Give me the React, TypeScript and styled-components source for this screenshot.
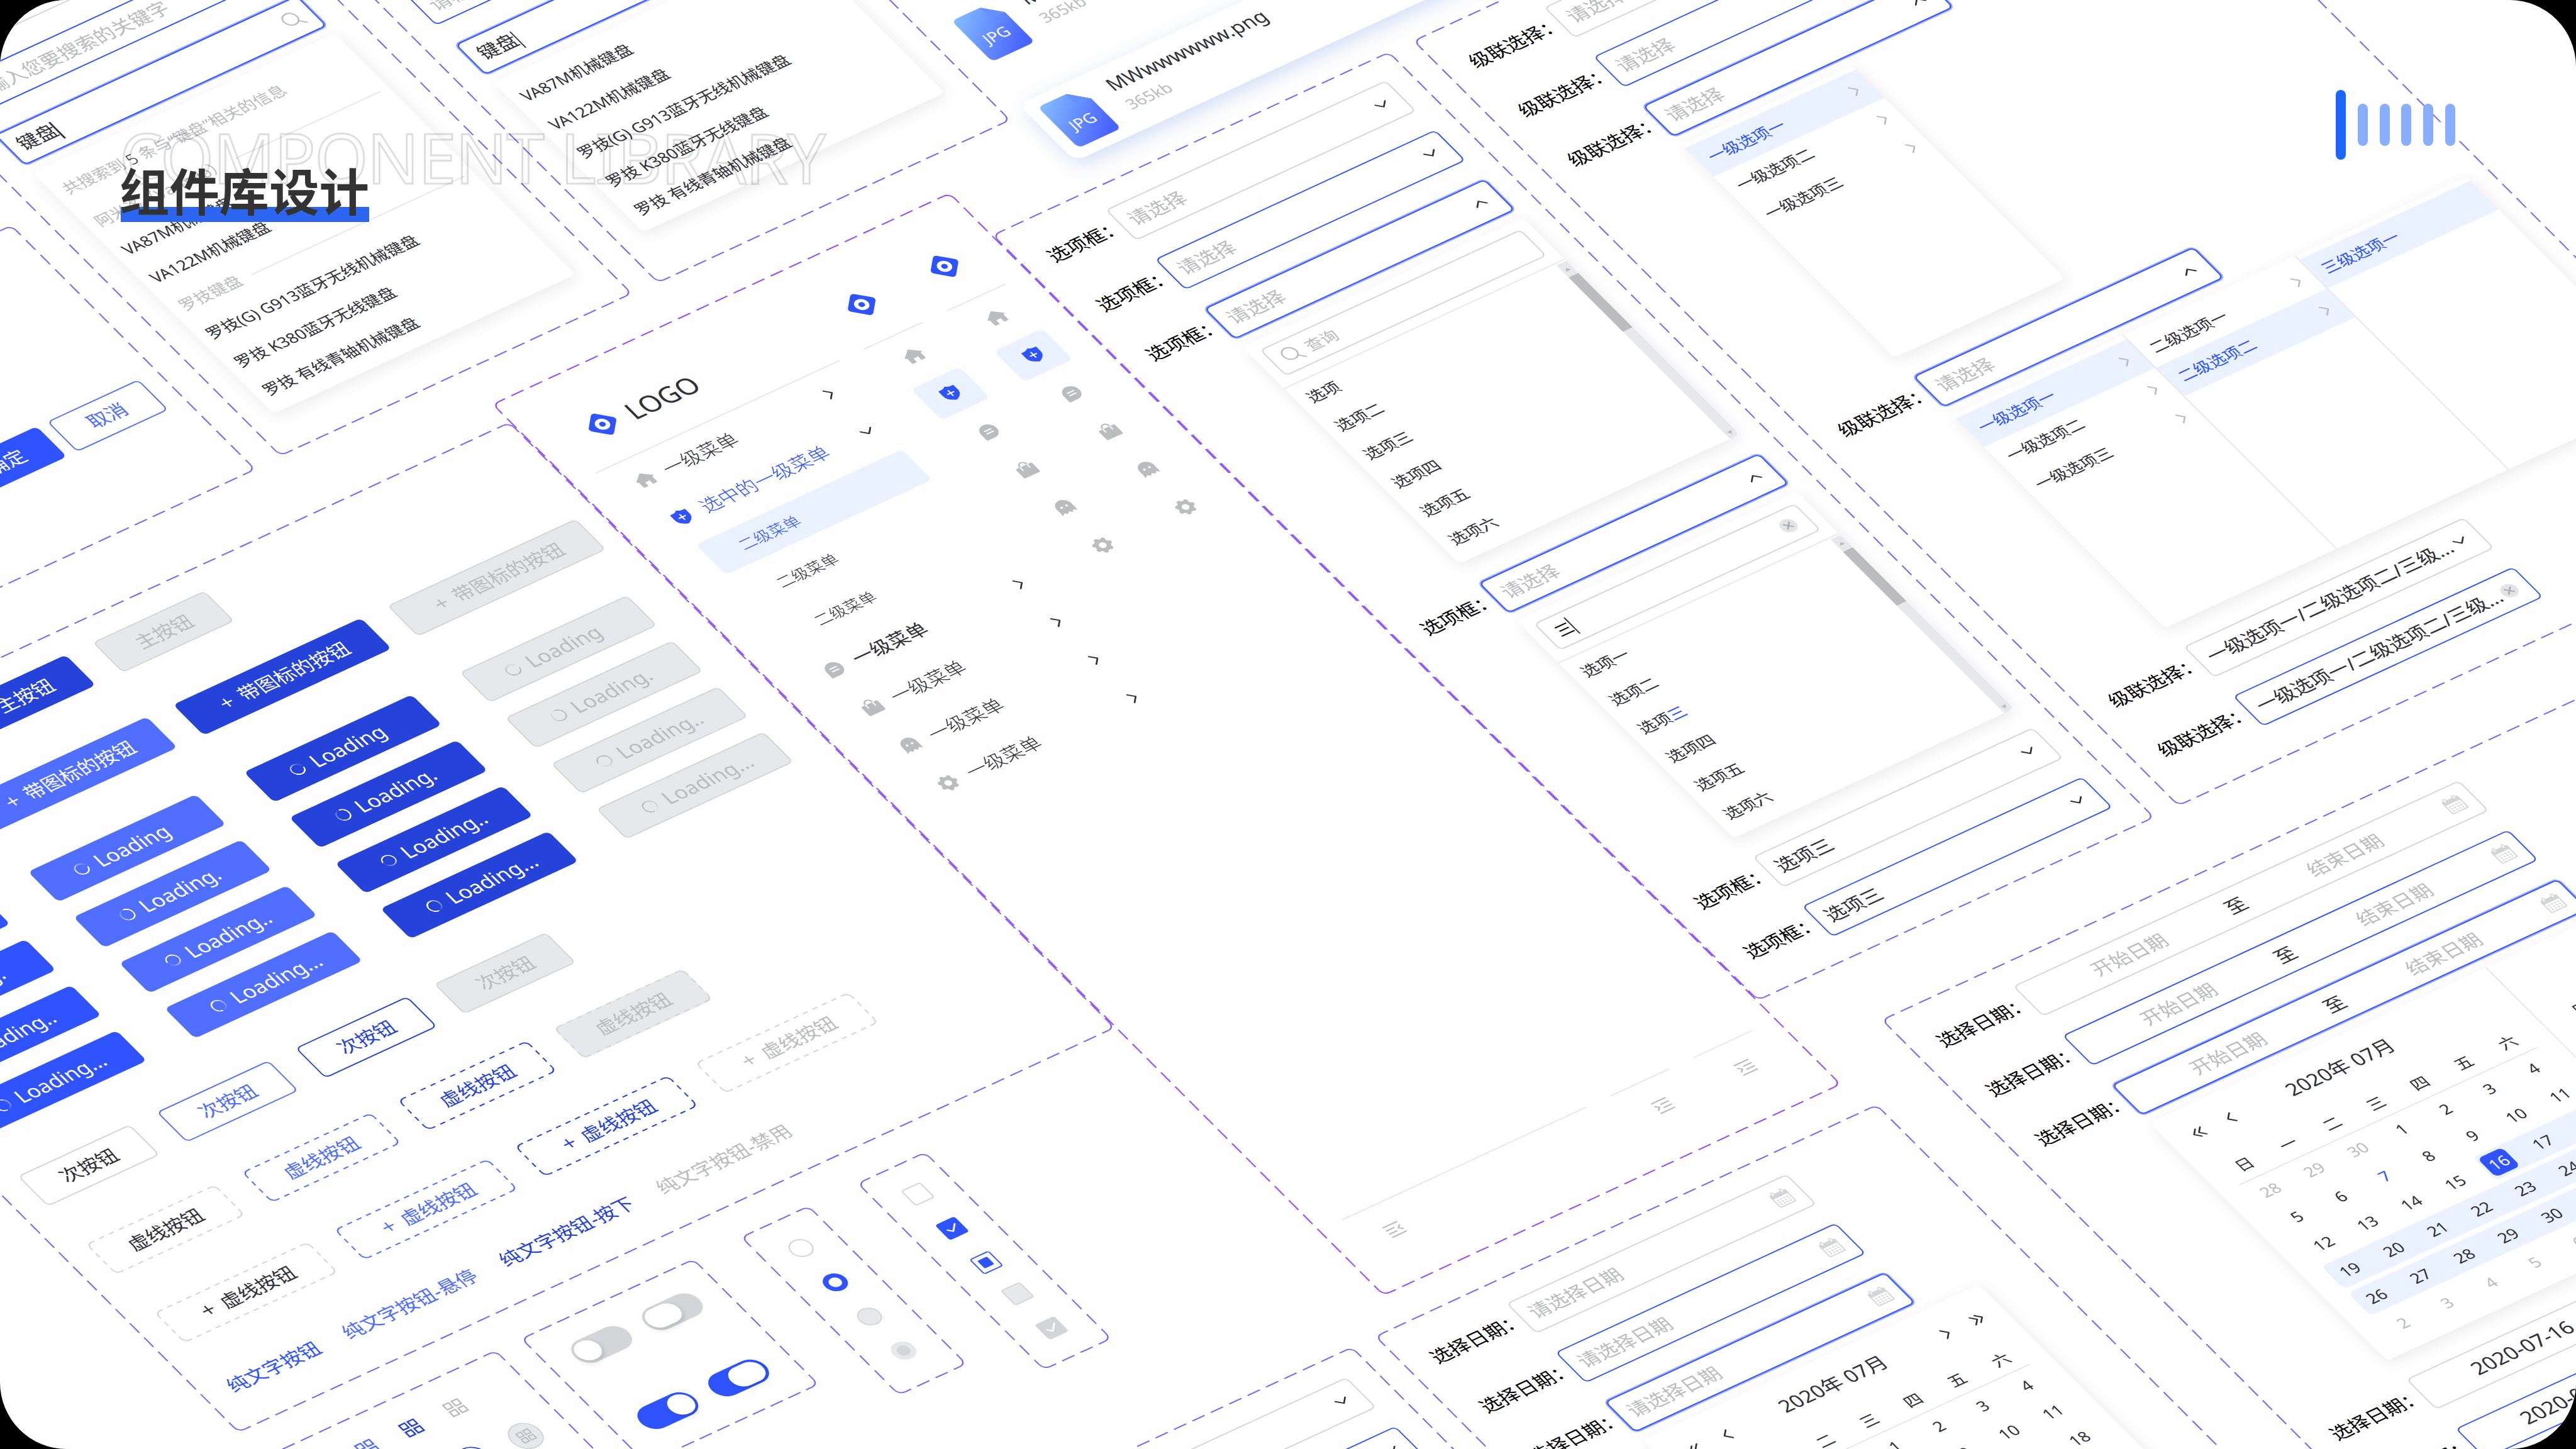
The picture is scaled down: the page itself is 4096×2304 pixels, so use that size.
import React from "react";
import styled, { createGlobalStyle, css } from "styled-components";

const PRIMARY = '#2f54ff';
const HOVER = '#506eff';
const ACTIVE = '#2643d9';
const TEXT = '#303238';
const MUTED = '#bbbcbe';
const BORDER = '#d4d5d9';
const FILL = '#e7e8ec';
const TINT = '#eaf2ff';

const GlobalStyle = createGlobalStyle`
    html, body {
        margin: 0;
        background: #000;
        overflow: hidden;
    }
    * {
        box-sizing: border-box;
    }
`

const Page = styled.main`
    position: relative;
    width: 4096px;
    height: 2304px;
    overflow: hidden;
    background: #fefefe;
    border-radius: 106px;
    font-family: "Noto Sans", "Noto Sans CJK SC", sans-serif;
    color: ${TEXT};
`

/** the tilted canvas. 1 css px inside of it is 1 px of the component sheet */
const Board = styled.div`
    position: absolute;
    left: 0;
    top: 0;
    width: 0;
    height: 0;
    zoom: 2.13333;
    transform-origin: 0 0;
    transform: matrix(0.9079, -0.4192, 0.7071, 0.7071, 0, 0);
    font-size: 14.67px;
    line-height: 20px;
    white-space: nowrap;
`

/* ---------- dashed outlines ---------- */

const Outline = styled.svg`
    position: absolute;
    left: 0;
    top: 0;
    overflow: visible;
    pointer-events: none;
`

interface dashProps {
    w: number,
    h: number,
    r: number,
    dash: number,
    color: string,
}

/** solid rounded corners, and edges that begin and end on half a dash */
const DashedOutline = ({ w, h, r, dash, color }: dashProps) => {
    const gap = dash > 5 ? 5 : dash;
    const edge = (len: number) => {
        const period = len / Math.max(1, Math.round(len / (dash + gap)));
        return { strokeDasharray: `${dash} ${period - dash}`, strokeDashoffset: dash / 2 };
    };
    const x = w - 0.5;
    const y = h - 0.5;
    const a = 0.5 + r;
    const lenX = w - 1 - r * 2;
    const lenY = h - 1 - r * 2;
    return (
        <Outline width={w} height={h} fill="none" stroke={color} strokeWidth="1">
            <path d={`M0.5 ${a}A${r} ${r} 0 0 1 ${a} 0.5M${x - r} 0.5A${r} ${r} 0 0 1 ${x} ${a}M${x} ${y - r}A${r} ${r} 0 0 1 ${x - r} ${y}M${a} ${y}A${r} ${r} 0 0 1 0.5 ${y - r}`} />
            <path d={`M${a} 0.5h${lenX}`} {...edge(lenX)} />
            <path d={`M${a} ${y}h${lenX}`} {...edge(lenX)} />
            <path d={`M0.5 ${a}v${lenY}`} {...edge(lenY)} />
            <path d={`M${x} ${a}v${lenY}`} {...edge(lenY)} />
        </Outline>
    );
}

interface boxProps {
    $x: number,
    $y: number,
    $w: number,
    $h: number,
    $gap?: number,
}

const PanelBox = styled.section<boxProps>`
    position: absolute;
    left: ${p => p.$x}px;
    top: ${p => p.$y}px;
    width: ${p => p.$w}px;
    height: ${p => p.$h}px;
    padding: 20px;
    display: flex;
    flex-direction: column;
    gap: ${p => p.$gap ?? 20}px;
`

interface panelProps {
    x: number,
    y: number,
    w: number,
    h: number,
    gap?: number,
    color?: string,
    className?: string,
    children: React.ReactNode,
}

const Panel = ({ x, y, w, h, gap, color = '#7b61ff', className, children }: panelProps) => (
    <PanelBox className={className} $x={x} $y={y} $w={w} $h={h} $gap={gap}>
        <DashedOutline w={w} h={h} r={5} dash={10} color={color} />
        {children}
    </PanelBox>
)

/* ---------- icons ---------- */

const Svg = styled.svg<{ $size?: number }>`
    display: block;
    flex: none;
    width: ${p => p.$size ?? 16}px;
    height: ${p => p.$size ?? 16}px;
    overflow: visible;
`

const turns = { down: 0, left: 90, up: 180, right: 270 };

const Chevron = ({ dir, color = TEXT, double = false }: { dir: keyof typeof turns, color?: string, double?: boolean }) => (
    <Svg viewBox="0 0 16 16" fill="none" stroke={color} strokeWidth="1.1" strokeLinecap="round" strokeLinejoin="round">
        <g transform={`rotate(${turns[dir]} 8 8)`}>
            {double ? <path d="M4.4 4l3.6 3.6L11.6 4M4.4 8l3.6 3.6L11.6 8" /> : <path d="M4 6l4 4 4-4" />}
        </g>
    </Svg>
)

const SearchIcon = () => (
    <Svg viewBox="0 0 16 16" fill="none" stroke={MUTED} strokeWidth="1.1" strokeLinecap="round">
        <circle cx="7" cy="7" r="5.3" />
        <path d="M11 11l3.6 3.6" />
    </Svg>
)

const PlusIcon = () => (
    <Svg viewBox="0 0 16 16" stroke="currentColor" strokeWidth="1.1">
        <path d="M8 4v8M4 8h8" />
    </Svg>
)

const ClearIcon = () => (
    <Svg viewBox="0 0 16 16" stroke="#aaacb2" strokeWidth="1.1">
        <circle cx="8" cy="8" r="6" fill="#e3e4e9" stroke="none" />
        <path d="M5.4 5.4l5.2 5.2M10.6 5.4l-5.2 5.2" />
    </Svg>
)

const CalendarIcon = () => (
    <Svg viewBox="0 0 16 16">
        <rect x="1.8" y="2.8" width="12.4" height="11.6" rx="0.8" fill="#fff" stroke={BORDER} strokeWidth="0.9" />
        <path d="M1.4 3.2q0-.8.8-.8h11.6q.8 0 .8.8v3H1.4z" fill={BORDER} />
        <rect x="3.5" y="0.8" width="1.8" height="3.2" rx="0.9" fill="#fff" stroke={BORDER} strokeWidth="0.7" />
        <rect x="10.7" y="0.8" width="1.8" height="3.2" rx="0.9" fill="#fff" stroke={BORDER} strokeWidth="0.7" />
        <path d="M3.5 8.2h9M3.5 10.3h9M3.5 12.4h9" stroke={BORDER} strokeWidth="1" strokeDasharray="1.5 1" />
    </Svg>
)

const GridIcon = ({ size = 16 }: { size?: number }) => (
    <Svg $size={size} viewBox="0 0 16 16" fill="none" stroke="currentColor" strokeWidth="1.2">
        <rect x="2.2" y="2.2" width="4.6" height="4.6" />
        <rect x="9.2" y="2.2" width="4.6" height="4.6" />
        <rect x="2.2" y="9.2" width="4.6" height="4.6" />
        <rect x="9.2" y="9.2" width="4.6" height="4.6" />
    </Svg>
)

const LogoMark = () => (
    <Svg $size={24} viewBox="0 0 24 24">
        <rect x="3.7" y="3.7" width="16.6" height="16.6" rx="2.6" transform="rotate(45 12 12)" fill={PRIMARY} />
        <circle cx="12" cy="12" r="5" fill="#fff" />
        <circle cx="12" cy="12" r="2.2" fill={PRIMARY} />
    </Svg>
)

const FoldIcon = ({ open }: { open?: boolean }) => (
    <Svg viewBox="0 0 16 16" fill="none" stroke={MUTED} strokeWidth="1.1" strokeLinecap="round">
        <path d="M2.5 3h11M2.5 13h11" />
        {open
            ? <path d="M2.5 6.4h6M2.5 9.7h6M13.2 6.2l-2.2 1.9 2.2 1.9" />
            : <path d="M7.5 6.4h6M7.5 9.7h6M2.8 6.2L5 8.1l-2.2 1.9" />}
    </Svg>
)

/* soft toothed outline of the settings icon */
const gearPath = Array.from({ length: 72 }, (_, i) => {
    const a = (i / 72) * Math.PI * 2;
    const r = 6.2 + 0.75 * Math.tanh(2.2 * Math.cos(7 * a));
    return `${i ? 'L' : 'M'}${(8 + r * Math.cos(a)).toFixed(2)} ${(8 + r * Math.sin(a)).toFixed(2)}`;
}).join('') + 'Z';

type iconName = 'home' | 'shield' | 'chat' | 'bag' | 'ghost' | 'gear';

const MenuIcon = ({ name }: { name: iconName }) => (
    <Svg viewBox="0 0 16 16" fill={name == 'shield' ? PRIMARY : MUTED}>
        {name == 'home' && <path transform="translate(.4 .6)" d="M7.5 1.9q.5-.4 1 0l5.9 4.8q.8.8-.2 1.2H13.5v4.9q0 .8-.8.8H9.9v-3.2q0-.5-.5-.5H6.6q-.5 0-.5.5v3.2H3.300q-.8 0-.8-.8V7.900H1.800q-1-.4-.2-1.200z" />}
        {name == 'shield' && <>
            <path d="M8 1.300c1.500 1.200 3.400 1.600 5.700 1.500q.4 0 .4.400v4.600c0 3.200-2.400 5.400-6.100 7-3.700-1.600-6.100-3.800-6.100-7V3.200q0-.4.4-.4C4.600 2.900 6.500 2.500 8 1.300z" />
            <path d="M8 5.400v5M5.500 7.900h5" stroke="#fff" strokeWidth="1" strokeLinecap="round" />
        </>}
        {name == 'chat' && <>
            <path d="M8 1.700a6.300 6.300 0 1 1 0 12.600H2.300q-.7 0-.6-.6V8A6.300 6.300 0 0 1 8 1.700z" />
            <path d="M5.500 6.700h5M5.500 9.300h5" stroke="#fff" strokeWidth="1" strokeLinecap="round" />
        </>}
        {name == 'bag' && <>
            <rect x="1.500" y="4.600" width="13" height="9.600" rx="1" />
            <path d="M5.200 7.600V4.200a2.800 2.800 0 0 1 5.600 0v3.400" fill="none" stroke={MUTED} strokeWidth="1.100" />
            <path d="M5.200 4.800v2.800M10.800 4.800v2.800" stroke="#fff" strokeWidth="1" strokeLinecap="round" />
        </>}
        {name == 'ghost' && <>
            <path d="M8 1.600a5.900 5.900 0 0 1 5.900 5.900v6.800l-2.300-1.700-1.700 1.700L8 12.600l-1.900 1.700-1.700-1.700-2.700 1.700q.4-1.200.4-3V7.500A5.900 5.900 0 0 1 8 1.600z" />
            <circle cx="5.900" cy="7.600" r="0.900" fill="#fff" />
            <circle cx="10" cy="7.600" r="0.900" fill="#fff" />
        </>}
        {name == 'gear' && <>
            <path d={gearPath} />
            <circle cx="8" cy="8" r="2.600" fill="#fff" />
        </>}
    </Svg>
)

/* ---------- form fields ---------- */

type tone = 'idle' | 'hover' | 'focus';

const Stack = styled.div`
    display: flex;
    flex-direction: column;
    gap: 8px;
    flex: none;
`

const FormRow = styled.div`
    display: flex;
    align-items: center;
    height: 32px;
    flex: none;
`

const Label = styled.span<{ $w: number }>`
    flex: none;
    width: ${p => p.$w}px;
    font-size: 14.5px;
    color: #000;
`

const Field = styled.div<{ $tone: tone, $w?: number, $h?: number }>`
    display: flex;
    align-items: center;
    justify-content: space-between;
    flex: none;
    width: ${p => p.$w ?? 230}px;
    height: ${p => p.$h ?? 32}px;
    padding: 0 7px;
    border: 1px solid ${p => p.$tone == 'idle' ? BORDER : PRIMARY};
    border-radius: 4px;
    background: #fff;
    box-shadow: ${p => p.$tone == 'focus' ? '0 0 0 1px #97a9ff' : 'none'};
`

const Value = styled.span<{ $filled?: boolean }>`
    color: ${p => p.$filled ? TEXT : MUTED};
`

const Caret = styled.i`
    display: inline-block;
    width: 1px;
    height: 17px;
    vertical-align: middle;
    background: ${TEXT};
`

const Popup = styled.div<{ $w: number, $h: number, $offset?: number, $pad?: number }>`
    display: flex;
    flex-direction: column;
    flex: none;
    width: ${p => p.$w}px;
    height: ${p => p.$h}px;
    margin-left: ${p => p.$offset ?? 0}px;
    padding-top: ${p => p.$pad ?? 0}px;
    border-radius: 4px;
    background: #fff;
    box-shadow: 0 3px 10px rgba(0, 0, 0, 0.08);
    font-size: 12.2px;
`

const Option = styled.div<{ $on?: boolean }>`
    display: flex;
    align-items: center;
    justify-content: space-between;
    flex: none;
    height: 30px;
    padding: 0 4.5px 0 8px;
    color: ${p => p.$on ? PRIMARY : TEXT};
    background: ${p => p.$on ? TINT : 'transparent'};
`

/* ---------- search panels ---------- */

const Hint = styled.div`
    flex: none;
    height: 42.5px;
    padding: 13px 8px 0;
    color: ${MUTED};

    em {
        color: ${TEXT};
        font-style: normal;
        font-weight: 300;
    }
`

const GroupTitle = styled.div`
    display: flex;
    align-items: center;
    gap: 9px;
    flex: none;
    height: 29.6px;
    padding: 0 7px 0 8px;
    color: ${MUTED};

    &::after {
        content: "";
        flex: 1;
        height: 1px;
        background: ${FILL};
    }
`

const GroupOption = styled(Option)`
    height: 29.6px;
    padding-left: 7.4px;
`

const SEARCH_HINT = '请输入您要搜索的关键字';
const VARMILO = ['VA87M机械键盘', 'VA122M机械键盘'];
const LOGITECH = ['罗技(G) G913蓝牙无线机械键盘', '罗技 K380蓝牙无线键盘', '罗技 有线青轴机械键盘'];

const SearchFields = () => (
    <>
        {(['idle', 'hover'] as tone[]).map(t => (
            <Field key={t} $tone={t} $w={248}><Value>{SEARCH_HINT}</Value><SearchIcon /></Field>
        ))}
    </>
)

const SearchPanels = () => (
    <>
        <Panel x={-98.8} y={-28.5} w={289.3} h={451}>
            <SearchFields />
            <Stack>
                <Field $tone="focus" $w={248}><Value $filled>键盘<Caret /></Value><SearchIcon /></Field>
                <Popup $w={248} $h={254}>
                    <Hint>共搜索到 <em>5</em> 条与“键盘”相关的信息</Hint>
                    <GroupTitle>阿米洛（Varmilo）</GroupTitle>
                    {VARMILO.map(o => <GroupOption key={o}>{o}</GroupOption>)}
                    <GroupTitle>罗技键盘</GroupTitle>
                    {LOGITECH.map(o => <GroupOption key={o}>{o}</GroupOption>)}
                </Popup>
            </Stack>
        </Panel>
        <Panel x={210.7} y={59.6} w={289.8} h={363.8}>
            <SearchFields />
            <Stack>
                <Field $tone="focus" $w={248}><Value $filled>键盘<Caret /></Value></Field>
                <Popup $w={248} $h={158} $pad={5.6}>
                    {[...VARMILO, ...LOGITECH].map(o => <Option key={o}>{o}</Option>)}
                </Popup>
            </Stack>
        </Panel>
    </>
)

/* ---------- select panels ---------- */

const SearchSlot = styled.div`
    flex: none;
    padding: 8px;
    border-bottom: 1px solid ${FILL};
`

const Query = styled.span`
    display: flex;
    align-items: center;
    color: #000;
`

const SearchText = styled.span`
    flex: 1;
    padding-left: 4px;
    color: ${MUTED};
`

const OptionArea = styled.div`
    display: flex;
    flex: 1;
`

const OptionList = styled.div`
    flex: 1;
`

const ScrollTrack = styled.div`
    display: flex;
    flex-direction: column;
    align-items: center;
    width: 8px;
    margin-top: 1px;
    background: ${FILL};
    border-bottom-right-radius: 4px;
`

const ScrollArrow = styled.i<{ $down?: boolean }>`
    width: 4px;
    height: 3px;
    margin: ${p => p.$down ? 'auto 0 3px' : '5px 0 5px'};
    background: ${MUTED};
    clip-path: ${p => p.$down ? 'polygon(0 0, 100% 0, 50% 100%)' : 'polygon(50% 0, 100% 100%, 0 100%)'};
`

const ScrollThumb = styled.div`
    width: 8px;
    height: 57px;
    background: ${MUTED};
`

const Match = styled.b`
    font-weight: inherit;
    color: ${PRIMARY};
`

const SelectPopup = ({ query, options, offset }: { query?: string, options: string[], offset: number }) => (
    <Popup $w={230} $h={229} $offset={offset}>
        <SearchSlot>
            <Field $tone="idle" $w={214} $h={28}>
                {query
                    ? <><Query>{query}<Caret /></Query><ClearIcon /></>
                    : <><SearchIcon /><SearchText>查询</SearchText></>}
            </Field>
        </SearchSlot>
        <OptionArea>
            <OptionList>
                {options.map(o => (
                    <Option key={o}>
                        {query && o.includes(query) ? <span>{o.replace(query, '')}<Match>{query}</Match></span> : o}
                    </Option>
                ))}
            </OptionList>
            <ScrollTrack>
                <ScrollArrow />
                <ScrollThumb />
                <ScrollArrow $down />
            </ScrollTrack>
        </OptionArea>
    </Popup>
)

interface selectProps {
    label: string,
    labelW: number,
    value?: string,
    tone?: tone,
    clear?: boolean,
}

const SelectRow = ({ label, labelW, value, tone = 'idle', clear }: selectProps) => (
    <FormRow>
        <Label $w={labelW}>{label}</Label>
        <Field $tone={tone}>
            <Value $filled={!!value}>{value ?? '请选择'}</Value>
            {clear ? <ClearIcon /> : <Chevron dir={tone == 'focus' ? 'up' : 'down'} />}
        </Field>
    </FormRow>
)

const TAIL_OPTIONS = ['选项二', '选项三', '选项四', '选项五', '选项六'];

const SelectPanel = () => (
    <Panel x={425} y={499.6} w={326} h={807.3}>
        <SelectRow label="选项框：" labelW={58} />
        <SelectRow label="选项框：" labelW={58} tone="hover" />
        <Stack>
            <SelectRow label="选项框：" labelW={58} tone="focus" />
            <SelectPopup offset={58} options={['选项', ...TAIL_OPTIONS]} />
        </Stack>
        <Stack>
            <SelectRow label="选项框：" labelW={58} tone="focus" />
            <SelectPopup offset={58} query="三" options={['选项一', ...TAIL_OPTIONS]} />
        </Stack>
        <SelectRow label="选项框：" labelW={58} value="选项三" />
        <SelectRow label="选项框：" labelW={58} value="选项三" tone="hover" />
    </Panel>
)

const Columns = styled.div`
    display: flex;
    flex: 1;
`

const Column = styled.div`
    flex: 1;
    padding-top: 4.5px;

    & + & {
        border-left: 1px solid ${FILL};
    }
`

const CascadePopup = ({ columns, active }: { columns: string[][], active: number[] }) => (
    <Popup $w={columns.length * 141 - 0.5} $h={225} $offset={72.5}>
        <Columns>
            {columns.map((list, c) => (
                <Column key={c}>
                    {list.map((o, i) => (
                        <Option key={o} $on={active[c] == i}>
                            {o}
                            {c < 2 && <Chevron dir="right" color={MUTED} />}
                        </Option>
                    ))}
                </Column>
            ))}
        </Columns>
    </Popup>
)

const LEVEL_ONE = ['一级选项一', '一级选项二', '一级选项三'];
const PICKED = '一级选项一/二级选项二/三级...';

const CascadePanel = () => (
    <Panel x={770.7} y={499.6} w={532} h={807}>
        <SelectRow label="级联选择：" labelW={72.5} />
        <SelectRow label="级联选择：" labelW={72.5} tone="hover" />
        <Stack>
            <SelectRow label="级联选择：" labelW={72.5} tone="focus" />
            <CascadePopup columns={[LEVEL_ONE]} active={[0]} />
        </Stack>
        <Stack>
            <SelectRow label="级联选择：" labelW={72.5} tone="focus" />
            <CascadePopup columns={[LEVEL_ONE, ['二级选项一', '二级选项二'], ['三级选项一']]} active={[0, 1, 0]} />
        </Stack>
        <SelectRow label="级联选择：" labelW={72.5} value={PICKED} />
        <SelectRow label="级联选择：" labelW={72.5} value={PICKED} tone="hover" clear />
    </Panel>
)

/* ---------- date panels ---------- */

const Month = styled.div`
    display: flex;
    flex-direction: column;
    width: 276px;
    padding: 0 12px;

    & + & {
        border-left: 0.5px solid ${BORDER};
    }
`

const MonthHead = styled.div<{ $single?: boolean }>`
    display: flex;
    align-items: center;
    height: 46.4px;
    padding: 0 2px;
    gap: 10px;
    font-size: 15px;

    span {
        flex: 1;
        text-align: center;
    }

    ${p => p.$single && css`
        padding: 0 0 0 4px;

        svg {
            margin-top: 3px;
        }
        span {
            margin-left: -4px;
        }
    `}
`

const Spacer = styled.i`
    width: 42px;
`

const Week = styled.div<{ $head?: boolean }>`
    display: flex;
    height: 28px;
    align-items: center;
    ${p => p.$head && css`
        height: 28.3px;
        padding-top: 2px;
        background: linear-gradient(${BORDER}, ${BORDER}) 4px 100% / 244px 0.5px no-repeat;
    `}
`

const Day = styled.div<{ $dim?: boolean, $blue?: boolean, $range?: 'start' | 'left' | 'mid' }>`
    display: flex;
    align-items: center;
    justify-content: center;
    width: 36px;
    height: 24px;
    color: ${p => p.$dim ? MUTED : p.$blue ? PRIMARY : TEXT};
    background: ${p => p.$range ? TINT : 'transparent'};
    ${p => p.$range == 'start' && css`
        width: 30px;
        margin-left: 6px;
        padding-right: 6px;
        border-radius: 4px 0 0 4px;
    `}
    ${p => p.$range == 'left' && css`
        width: 32px;
        margin-left: 4px;
        padding-right: 4px;
        border-radius: 4px 0 0 4px;
    `}
`

const Picked = styled.b`
    display: flex;
    align-items: center;
    justify-content: center;
    width: 20px;
    height: 20px;
    border-radius: 4px;
    font-weight: inherit;
    color: #fff;
    background: ${PRIMARY};
`

const WEEKDAYS = ['日', '一', '二', '三', '四', '五', '六'];

/** july 2020 starts on a wednesday but the sheet pads it with 3 days of june */
const CalendarMonth = ({ title, range, prev = true, next = false }: { title: string, range?: boolean, prev?: boolean, next?: boolean }) => {
    const cells = Array.from({ length: 42 }, (_, i) => i - 2);
    return (
        <Month>
            <MonthHead $single={prev && next}>
                {prev ? <><Chevron dir="left" double /><Chevron dir="left" /></> : <Spacer />}
                <span>{title}</span>
                {next ? <><Chevron dir="right" /><Chevron dir="right" double /></> : <Spacer />}
            </MonthHead>
            <Week $head>{WEEKDAYS.map(d => <Day key={d}>{d}</Day>)}</Week>
            {[0, 1, 2, 3, 4, 5].map(w => (
                <Week key={w}>
                    {cells.slice(w * 7, w * 7 + 7).map((n, i) => {
                        const inRange = range && n >= 16 && n <= 31;
                        const label = n < 1 ? n + 30 : n > 31 ? n - 31 : n;
                        return (
                            <Day
                                key={n}
                                $dim={n < 1 || n > 31}
                                $blue={n == 7}
                                $range={inRange ? (n == 16 ? 'start' : i == 0 ? 'left' : 'mid') : undefined}
                            >
                                {range && n == 16 ? <Picked>{label}</Picked> : label}
                            </Day>
                        );
                    })}
                </Week>
            ))}
        </Month>
    );
}

const Months = styled.div`
    display: flex;
    height: 100%;
`

const Segment = styled.span<{ $w: number, $tone?: 'value' | 'date', $last?: boolean }>`
    flex: none;
    width: ${p => p.$w}px;
    margin-right: ${p => p.$last ? 'auto' : 0};
    text-align: center;
    color: ${p => p.$tone ? TEXT : MUTED};
    font-size: ${p => p.$tone == 'date' ? '15.4px' : 'inherit'};
`

const RangeRow = ({ tone = 'idle', from, to }: { tone?: tone, from?: string, to?: string }) => (
    <FormRow>
        <Label $w={73}>选择日期：</Label>
        <Field $tone={tone} $w={366}>
            <Segment $w={150} $tone={from ? 'date' : undefined}>{from ?? '开始日期'}</Segment>
            <Segment $w={25} $tone="value">至</Segment>
            <Segment $w={154} $tone={to ? 'date' : undefined} $last>{to ?? '结束日期'}</Segment>
            <CalendarIcon />
        </Field>
    </FormRow>
)

const RangePanel = () => (
    <Panel x={483.7} y={1361.5} w={690} h={620}>
        <RangeRow />
        <RangeRow tone="hover" />
        <Stack>
            <RangeRow tone="focus" />
            <Popup $w={552} $h={250.4} $offset={73}>
                <Months>
                    <CalendarMonth title="2020年 07月" range />
                    <CalendarMonth title="2020年 08月" prev={false} next />
                </Months>
            </Popup>
        </Stack>
        <RangeRow from="2020-07-16" to="2020-07-31" />
        <RangeRow tone="hover" from="2020-07-16" to="2020-07-31" />
    </Panel>
)

const DateRow = ({ tone = 'idle' }: { tone?: tone }) => (
    <FormRow>
        <Label $w={72.5}>选择日期：</Label>
        <Field $tone={tone}><Value>请选择日期</Value><CalendarIcon /></Field>
    </FormRow>
)

const DatePanel = () => (
    <Panel x={21.5} y={1421.2} w={412.3} h={480}>
        <DateRow />
        <DateRow tone="hover" />
        <Stack>
            <DateRow tone="focus" />
            <Popup $w={276} $h={250.4} $offset={72.5}>
                <CalendarMonth title="2020年 07月" next />
            </Popup>
        </Stack>
    </Panel>
)

const LowerSelectPanel = () => (
    <Panel x={-325.5} y={1421.2} w={328.3} h={400}>
        <SelectRow label="选项框：" labelW={58} />
        <SelectRow label="选项框：" labelW={58} tone="hover" />
        <SelectRow label="选项框：" labelW={58} tone="focus" />
    </Panel>
)

/* ---------- sidebar ---------- */

const SideRow = styled.div`
    display: flex;
    gap: 20px;
    height: 100%;
`

const Side = styled.nav<{ $w: number }>`
    display: flex;
    flex-direction: column;
    width: ${p => p.$w}px;
    height: 900px;
`

const SideLogo = styled.header<{ $wide?: boolean }>`
    display: flex;
    align-items: center;
    gap: 8.5px;
    height: 65px;
    padding: 0 0 1px ${p => p.$wide ? 19.2 : 12}px;
    border-bottom: 1px solid ${FILL};
    font-size: 20px;
`

const SideItem = styled.div<{ $on?: boolean, $strong?: boolean }>`
    display: flex;
    align-items: center;
    gap: 8px;
    height: 32px;
    margin: 4px 0;
    padding: 0 16.3px 0 16px;
    color: ${p => p.$on ? PRIMARY : TEXT};
    font-weight: ${p => p.$strong ? 400 : 300};

    span {
        flex: 1;
    }
`

const SubItem = styled.div<{ $on?: boolean }>`
    height: 32px;
    margin: 4px 15px 4px 16px;
    padding-left: 24px;
    border-radius: 4px;
    line-height: 32px;
    font-size: 12px;
    font-weight: 300;
    color: ${p => p.$on ? PRIMARY : TEXT};
    background: ${p => p.$on ? TINT : 'transparent'};
`

const SideIcon = styled.div<{ $on?: boolean }>`
    display: flex;
    align-items: center;
    justify-content: center;
    height: 32px;
    margin: 4px;
    border-radius: 4px;
    background: ${p => p.$on ? TINT : 'transparent'};
`

const SideFoot = styled.footer`
    display: flex;
    align-items: center;
    height: 49px;
    margin-top: auto;
    padding-left: 16px;
    border-top: 1px solid ${FILL};
`

const MENU: iconName[] = ['home', 'shield', 'chat', 'bag', 'ghost', 'gear'];

const Sidebar = () => (
    <Panel x={49} y={455.2} w={376} h={940} color="#9747ff">
        <SideRow>
            <Side $w={200}>
                <SideLogo $wide><LogoMark />LOGO</SideLogo>
                {MENU.map(name => (
                    <React.Fragment key={name}>
                        <SideItem $on={name == 'shield'} $strong={name == 'chat'}>
                            <MenuIcon name={name} />
                            <span>{name == 'shield' ? '选中的一级菜单' : '一级菜单'}</span>
                            <Chevron dir={name == 'shield' ? 'down' : 'right'} />
                        </SideItem>
                        {name == 'shield' && <>
                            <SubItem $on>二级菜单</SubItem>
                            <SubItem>二级菜单</SubItem>
                            <SubItem>二级菜单</SubItem>
                        </>}
                    </React.Fragment>
                ))}
                <SideFoot><FoldIcon open /></SideFoot>
            </Side>
            {[0, 1].map(n => (
                <Side key={n} $w={48}>
                    <SideLogo><LogoMark /></SideLogo>
                    {MENU.map(name => (
                        <SideIcon key={name} $on={name == 'shield'}><MenuIcon name={name} /></SideIcon>
                    ))}
                    <SideFoot><FoldIcon /></SideFoot>
                </Side>
            ))}
        </SideRow>
    </Panel>
)

/* ---------- buttons ---------- */

type state = 'normal' | 'hover' | 'active' | 'disabled';
const STATES: state[] = ['normal', 'hover', 'active', 'disabled'];

const solidBg = { normal: PRIMARY, hover: HOVER, active: ACTIVE, disabled: FILL };
const lineColor = { normal: BORDER, hover: HOVER, active: ACTIVE, disabled: BORDER };
const lineText = { normal: TEXT, hover: HOVER, active: ACTIVE, disabled: MUTED };

const Row = styled.div<{ $gap: number }>`
    display: flex;
    flex: none;
    gap: ${p => p.$gap}px;
`

const BaseButton = styled.button`
    display: flex;
    align-items: center;
    justify-content: center;
    gap: 3px;
    flex: none;
    position: relative;
    height: 32px;
    padding: 0;
    border: 0;
    border-radius: 4px;
    font: inherit;
    white-space: nowrap;
`

const SolidButton = styled(BaseButton)<{ $state: state, $w: number }>`
    width: ${p => p.$w}px;
    color: ${p => p.$state == 'disabled' ? MUTED : '#fff'};
    background: ${p => solidBg[p.$state]};
    border: 1px solid ${p => p.$state == 'disabled' ? BORDER : solidBg[p.$state]};
`

const LineButton = styled(BaseButton)<{ $state: state, $w: number }>`
    width: ${p => p.$w}px;
    color: ${p => lineText[p.$state]};
    background: ${p => p.$state == 'disabled' ? FILL : '#fff'};
    border: 1px solid ${p => lineColor[p.$state]};
`

const DashBox = styled(BaseButton)<{ $state: state, $w: number, $plain?: boolean }>`
    width: ${p => p.$w}px;
    color: ${p => lineText[p.$state]};
    background: ${p => p.$state == 'disabled' && !p.$plain ? FILL : 'transparent'};
`

const DashButton = ({ state, w, icon }: { state: state, w: number, icon?: boolean }) => (
    <DashBox $state={state} $w={w} $plain={icon}>
        <DashedOutline w={w} h={32} r={4} dash={4} color={lineColor[state]} />
        {icon && <PlusIcon />}虚线按钮
    </DashBox>
)

const LoadingButton = styled(SolidButton)`
    justify-content: flex-start;
    gap: 6.5px;
    padding-left: 25.5px;
    font-size: 15.4px;
`

const Spinner = styled.i<{ $turn: number }>`
    width: 10.6px;
    height: 10.6px;
    border-radius: 50%;
    background: conic-gradient(from ${p => p.$turn}deg, currentColor 40%, transparent);
    mask: radial-gradient(closest-side, transparent calc(100% - 1.1px), #000 calc(100% - 1px));
`

const LoadingGrid = styled.div`
    display: grid;
    grid-template-columns: repeat(4, 137.5px);
    gap: 16px 39.6px;
`

const TextButton = styled(BaseButton)<{ $state: state }>`
    height: 14px;
    color: ${p => p.$state == 'normal' ? PRIMARY : lineText[p.$state]};
    background: none;
`

const textLabels = { normal: '纯文字按钮', hover: '纯文字按钮-悬停', active: '纯文字按钮-按下', disabled: '纯文字按钮-禁用' };

const ButtonPanel = () => (
    <Panel x={-670.8} y={474} w={720} h={638.7} gap={40}>
        <Row $gap={22}>{STATES.map(s => <SolidButton key={s} $state={s} $w={92}>主按钮</SolidButton>)}</Row>
        <Row $gap={21.5}>{STATES.map(s => <SolidButton key={s} $state={s} $w={154.5}><PlusIcon />带图标的按钮</SolidButton>)}</Row>
        <LoadingGrid>
            {['', '.', '..', '...'].map((dots, i) => STATES.map(s => (
                <LoadingButton key={s + i} $state={s} $w={137.5}><Spinner $turn={90 - i * 90} />Loading{dots}</LoadingButton>
            )))}
        </LoadingGrid>
        <Row $gap={22}>{STATES.map(s => <LineButton key={s} $state={s} $w={92}>次按钮</LineButton>)}</Row>
        <Row $gap={22}>{STATES.map(s => <DashButton key={s} state={s} w={106} />)}</Row>
        <Row $gap={22}>{STATES.map(s => <DashButton key={s} state={s} w={126} icon />)}</Row>
        <Row $gap={21.5}>{STATES.map(s => <TextButton key={s} $state={s}>{textLabels[s]}</TextButton>)}</Row>
    </Panel>
)

const DialogPanel = styled(Panel)`
    flex-direction: row;
    align-items: flex-end;
    justify-content: flex-end;
    padding: 0 16px 72.5px;
`

const iconColor = { normal: TEXT, hover: HOVER, active: ACTIVE, disabled: MUTED };

const IconTint = styled.span<{ $state: state }>`
    color: ${p => iconColor[p.$state]};
`

const RoundRow = styled(Row)`
    justify-content: flex-end;
`

const RoundButton = styled.span<{ $state: state }>`
    display: flex;
    align-items: center;
    justify-content: center;
    width: 24px;
    height: 24px;
    border: 1px solid ${p => lineColor[p.$state]};
    border-radius: 50%;
    color: ${p => iconColor[p.$state]};
    background: ${p => p.$state == 'disabled' ? FILL : '#fff'};
`

const IconPanel = () => (
    <Panel x={-670.8} y={1138.6} w={191} h={150} gap={24}>
        <Row $gap={20}>{STATES.map(s => <IconTint key={s} $state={s}><GridIcon /></IconTint>)}</Row>
        <RoundRow $gap={20}>{STATES.map(s => <RoundButton key={s} $state={s}><GridIcon size={13} /></RoundButton>)}</RoundRow>
    </Panel>
)

/* ---------- switches, radios, checkboxes ---------- */

const SwitchGrid = styled.div`
    display: grid;
    grid-template-columns: 44px 44px;
    gap: 48px 14px;
`

const Switch = styled.div<{ $on?: boolean }>`
    display: flex;
    justify-content: ${p => p.$on ? 'flex-end' : 'flex-start'};
    width: 44px;
    height: 22px;
    padding: 2px;
    border-radius: 11px;
    background: ${p => p.$on ? PRIMARY : BORDER};
`

const Knob = styled.i<{ $pressed?: boolean }>`
    width: ${p => p.$pressed ? 26 : 18}px;
    height: 18px;
    border-radius: 9px;
    background: #fff;
    box-shadow: 0 2px 4px rgba(0, 35, 11, 0.16);
`

const SwitchPanel = () => (
    <Panel x={-459.2} y={1138.6} w={142} h={132.5}>
        <SwitchGrid>
            <Switch><Knob /></Switch>
            <Switch><Knob $pressed /></Switch>
            <Switch $on><Knob /></Switch>
            <Switch $on><Knob $pressed /></Switch>
        </SwitchGrid>
    </Panel>
)

const Radio = styled.span<{ $edge: string, $ring: number, $fill: string }>`
    width: 16px;
    height: 16px;
    flex: none;
    border: ${p => p.$ring}px solid ${p => p.$edge};
    border-radius: 50%;
    background: ${p => p.$fill};
`

const RadioPanel = () => (
    <Panel x={-279} y={1138.8} w={56} h={167}>
        <Radio $edge={BORDER} $ring={1} $fill="#fff" />
        <Radio $edge={PRIMARY} $ring={4} $fill="#fff" />
        <Radio $edge={BORDER} $ring={1} $fill={FILL} />
        <Radio $edge={FILL} $ring={4} $fill={BORDER} />
    </Panel>
)

const Check = styled.span<{ $edge: string, $fill: string, $lift?: boolean }>`
    display: flex;
    align-items: center;
    justify-content: center;
    width: 16px;
    height: 16px;
    flex: none;
    margin-top: ${p => p.$lift ? -3 : 0}px;
    border: 1px solid ${p => p.$edge};
    border-radius: 2px;
    background: ${p => p.$fill};
`

const HalfMark = styled.i`
    width: 8px;
    height: 8px;
    border-radius: 1px;
    background: ${PRIMARY};
`

const Tick = () => (
    <Svg $size={14} viewBox="0 0 14 14" fill="none" stroke="#fff" strokeWidth="1.2" strokeLinecap="round" strokeLinejoin="round">
        <path d="M3.4 6.8l2.7 2.7 5-5" />
    </Svg>
)

const CheckPanel = () => (
    <Panel x={-183.3} y={1138.8} w={56} h={197}>
        <Check $edge={BORDER} $fill="#fff" />
        <Check $edge={PRIMARY} $fill={PRIMARY}><Tick /></Check>
        <Check $edge={PRIMARY} $fill="#fff"><HalfMark /></Check>
        <Check $edge={BORDER} $fill={FILL} $lift />
        <Check $edge={BORDER} $fill={BORDER}><Tick /></Check>
    </Panel>
)

/* ---------- upload list ---------- */

const Uploads = styled.div`
    position: absolute;
    left: 513.5px;
    top: 323.5px;
    display: flex;
    flex-direction: column;
    gap: 31px;
`

const FileCard = styled.div<{ $raised?: boolean }>`
    display: flex;
    align-items: center;
    gap: 16.5px;
    width: 360px;
    height: 60px;
    padding: 0 9px;
    border-radius: 8px;
    background: #fff;
    box-shadow: ${p => p.$raised ? '0 5px 14px rgba(52, 108, 214, 0.22)' : 'none'};
`

const FileThumb = styled.div`
    position: relative;
    width: 35px;
    height: 43px;

    svg {
        width: 35px;
        height: 43px;
    }
    span {
        position: absolute;
        inset: 15px 0 auto;
        text-align: center;
        font-size: 12px;
        line-height: 20px;
        color: #fff;
    }
`

const FileInfo = styled.div`
    display: flex;
    flex-direction: column;
    margin-bottom: 6px;
    font-size: 14.9px;

    small {
        font-size: 12.2px;
        color: ${MUTED};
    }
`

const UploadList = () => (
    <Uploads>
        {[false, true].map(raised => (
            <FileCard key={String(raised)} $raised={raised}>
                <FileThumb>
                    <Svg viewBox="0 0 35 43">
                        <defs>
                            <linearGradient id="file" x1="0" y1="0" x2="0.7" y2="1">
                                <stop offset="0" stopColor="#85bfff" />
                                <stop offset="1" stopColor="#4963ff" />
                            </linearGradient>
                        </defs>
                        <path d="M4 0h19.5L35 11.5V39a4 4 0 0 1-4 4H4a4 4 0 0 1-4-4V4a4 4 0 0 1 4-4z" fill="url(#file)" />
                        <path d="M23.5 0v7.5a4 4 0 0 0 4 4H35z" fill="#6690ff" />
                    </Svg>
                    <span>JPG</span>
                </FileThumb>
                <FileInfo>
                    MWwwwwww.png
                    <small>365kb</small>
                </FileInfo>
            </FileCard>
        ))}
    </Uploads>
)

/* ---------- cover title and mark ---------- */

const Cover = styled.div`
    position: absolute;
    left: 190px;
    top: 175px;
`

const Ghost = styled.div`
    font-size: 109px;
    line-height: 150px;
    height: 88px;
    letter-spacing: -1.6px;
    white-space: nowrap;
    color: transparent;
    -webkit-text-stroke: 3px rgba(0, 0, 0, 0.13);
`

const Title = styled.h1`
    width: max-content;
    margin: 0;
    padding-bottom: 14px;
    font-size: 79.4px;
    line-height: 76px;
    font-weight: 700;
    color: #333;
    font-family: "Noto Sans CJK SC", sans-serif;
    background: linear-gradient(#2b65f0, #2b65f0) 2px 100% / 100% 24px no-repeat;
`

const Bars = styled.div`
    position: absolute;
    left: 3714px;
    top: 143px;
    display: flex;
    align-items: center;
    gap: 18.8px;

    i {
        width: 16px;
        height: 67px;
        border-radius: 8px;
        background: #89adff;
    }
    i:first-child {
        height: 111px;
        background: #1c66ff;
    }
`

const App = () => (
    <Page>
        <GlobalStyle />
        <Board>
            <SearchPanels />
            <DialogPanel x={-560} y={166} w={440.3} h={258} gap={8}>
                <SolidButton $state="normal" $w={75}>确定</SolidButton>
                <LineButton $state="hover" $w={75}>取消</LineButton>
            </DialogPanel>
            <ButtonPanel />
            <UploadList />
            <Sidebar />
            <SelectPanel />
            <CascadePanel />
            <RangePanel />
            <DatePanel />
            <LowerSelectPanel />
            <IconPanel />
            <SwitchPanel />
            <RadioPanel />
            <CheckPanel />
        </Board>
        <Cover>
            <Ghost>COMPONENT LIBRARY</Ghost>
            <Title>组件库设计</Title>
        </Cover>
        <Bars>{[0, 1, 2, 3, 4, 5].map(i => <i key={i} />)}</Bars>
    </Page>
)

export default App;
